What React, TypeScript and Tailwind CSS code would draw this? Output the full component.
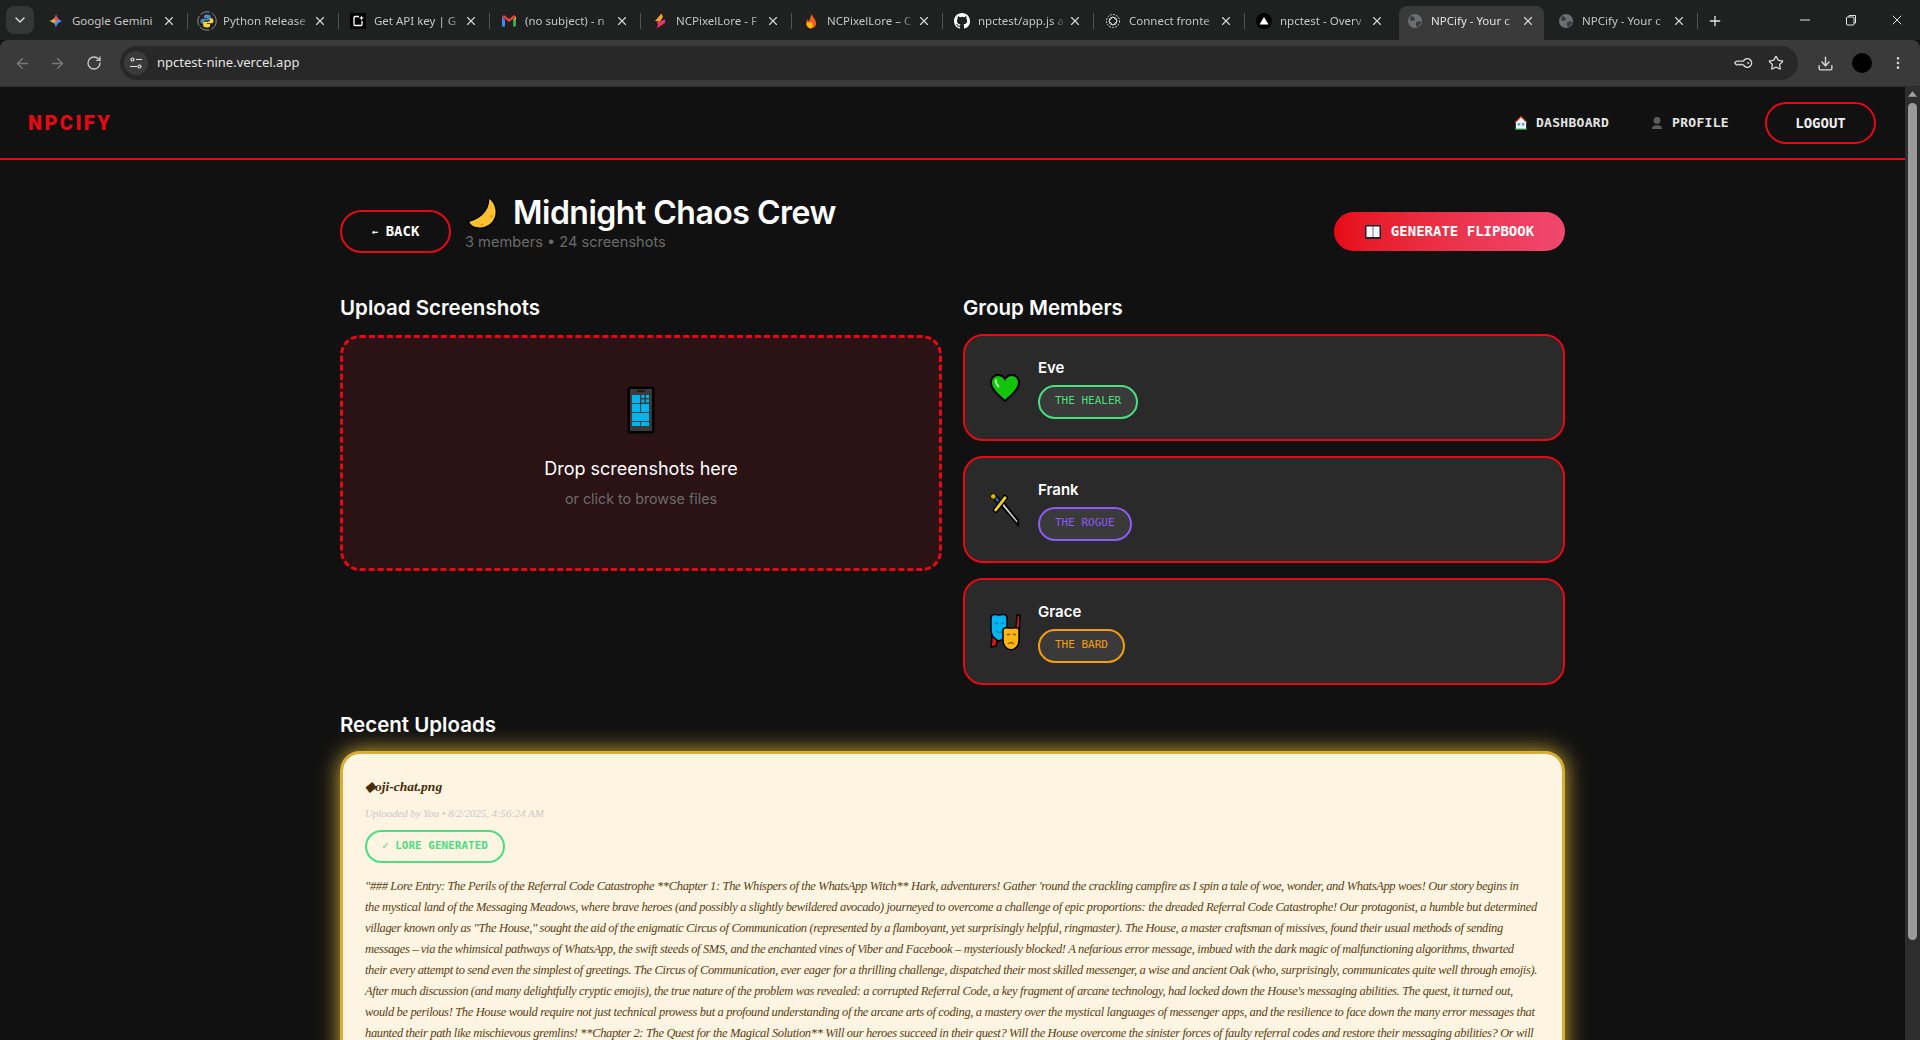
import { ReactNode } from 'react'
import {
  ArrowLeft,
  ArrowRight,
  ChevronDown,
  Download,
  KeyRound,
  Minus,
  MoreVertical,
  Plus,
  RotateCw,
  Star,
  X,
} from 'lucide-react'

const Gemini = () => (
  <svg viewBox="0 0 16 16" className="w-4 h-4">
    <path d="M8 1 C8.5 5 11 7.5 15 8 C11 8.5 8.5 11 8 15 C7.5 11 5 8.5 1 8 C5 7.5 7.5 5 8 1Z" fill="#4f8ff7" />
    <path d="M8 1 C8.3 3.5 9.5 5.5 11.5 6.5 L8 8 L4.5 6.5 C6.5 5.5 7.7 3.5 8 1Z" fill="#e8534a" />
    <path d="M1 8 C3 7.8 4.5 7 5.5 5.8 L8 8 L5.5 10.2 C4.5 9 3 8.2 1 8Z" fill="#f4b400" />
  </svg>
)

const Python = () => (
  <svg viewBox="0 0 20 20" className="w-5 h-5 shrink-0">
    <circle cx="10" cy="10" r="9.2" fill="none" stroke="#8a8d90" strokeWidth="1" strokeDasharray="10 2" />
    <path d="M10 3.5c-2.6 0-3 1-3 2v1.5h3.2v.7H5.6C4.4 7.700 3.500 8.700 3.500 10.300c0 1.600.9 2.500 2 2.500H7v-1.600c0-1.100 1-2 2.100-2h3c1 0 1.700-.8 1.700-1.800V5.500c0-1-1-2-3.800-2z" fill="#4b8bbe" />
    <path d="M10 16.500c2.600 0 3-1 3-2V13H9.800v-.7h4.600c1.200 0 2.100-1 2.100-2.600 0-1.600-.9-2.500-2-2.500H13v1.600c0 1.100-1 2-2.100 2h-3c-1 0-1.700.8-1.700 1.800v1.900c0 1 1 2 3.800 2z" fill="#ffd43b" />
  </svg>
)

const ApiKey = () => (
  <svg viewBox="0 0 16 16" className="w-4 h-4">
    <rect width="16" height="16" fill="#000" />
    <path d="M9 3.500H5a1 1 0 0 0-1 1v7a1 1 0 0 0 1 1h6a1 1 0 0 0 1-1V8" fill="none" stroke="#fff" strokeWidth="1.300" />
    <path d="M11.500 2.500l.7 1.800 1.800.7-1.800.7-.7 1.800-.7-1.800-1.800-.7 1.800-.7z" fill="#fff" />
  </svg>
)

const Gmail = () => (
  <svg viewBox="0 0 16 16" className="w-4 h-4">
    <path d="M1 3.500v10h3V7z" fill="#4285f4" />
    <path d="M15 3.500v10h-3V7z" fill="#34a853" />
    <path d="M1 3.500 8 9l7-5.500L13 2 8 6 3 2z" fill="#ea4335" />
    <path d="M12 7l3-3.500V6z" fill="#fbbc04" />
  </svg>
)

const Spark = () => (
  <svg viewBox="0 0 16 16" className="w-4 h-4">
    <path d="M9.500 0.500 3 8l5 .500L11 4z" fill="#f5a623" />
    <path d="M13 6.500 5 9l1 3-1.500 3.500L13 10z" fill="#e8336d" />
  </svg>
)

const Flame = () => (
  <svg viewBox="0 0 16 16" className="w-4 h-4">
    <path d="M8.500 1C9.500 4 13 6 13 10.500A5 5 0 0 1 3 10.500C3 8.500 4 7.500 4.800 6.500L6 8.500C7 6 7.500 3.500 8.500 1Z" fill="#f4611e" />
    <path d="M4 9.500A4.500 5 0 0 0 8 15.500 4 4 0 0 0 8 9c-1 .8-3 1.200-4 .500z" fill="#ffc107" />
  </svg>
)

const Github = () => (
  <svg viewBox="0 0 16 16" className="w-4 h-4" fill="#fff">
    <path d="M8 0C3.580 0 0 3.580 0 8c0 3.540 2.290 6.530 5.470 7.590.4.070.55-.17.55-.38 0-.19-.01-.82-.01-1.490-2.010.37-2.530-.49-2.690-.94-.09-.23-.48-.94-.82-1.130-.28-.15-.68-.52-.01-.53.63-.01 1.080.58 1.230.82.720 1.210 1.870.870 2.330.660.070-.520.280-.870.510-1.070-1.780-.200-3.640-.890-3.640-3.950 0-.870.310-1.590.820-2.150-.080-.200-.360-1.020.080-2.120 0 0 .670-.210 2.200.820a7.420 7.420 0 0 1 4 0c1.530-1.040 2.200-.820 2.200-.820.440 1.100.160 1.920.080 2.120.510.560.820 1.270.820 2.150 0 3.070-1.870 3.750-3.650 3.950.290.250.540.730.540 1.480 0 1.070-.010 1.930-.010 2.200 0 .210.150.460.550.380A8.010 8.010 0 0 0 16 8c0-4.420-3.580-8-8-8z" />
  </svg>
)

const OpenAi = () => (
  <svg viewBox="0 0 16 16" className="w-4 h-4" fill="none" stroke="#c4c7c5" strokeWidth="1">
    <circle cx="8" cy="8" r="6.500" strokeDasharray="2 1" />
    <circle cx="8" cy="8" r="4" />
    <path d="M4 8l4-4 4 4-4 4z" />
  </svg>
)

const Vercel = () => (
  <svg viewBox="0 0 16 16" className="w-4 h-4">
    <circle cx="8" cy="8" r="8" fill="#000" />
    <path d="M8 4l4.500 7.500h-9z" fill="#fff" />
  </svg>
)

const Globe = () => (
  <svg viewBox="0 0 16 16" className="w-4 h-4">
    <circle cx="8" cy="8" r="7" fill="#6b6e72" />
    <path d="M4 3l3 1 1 3-3 1-2-1zM9 9l4-1 1 2-3 4-2-1z" fill="#3a3a3a" />
  </svg>
)

const tabs: { title: string; icon: ReactNode; active?: boolean; fade?: boolean }[] = [
  { title: 'Google Gemini', icon: <Gemini /> },
  { title: 'Python Release', icon: <Python />, fade: true },
  { title: 'Get API key | G', icon: <ApiKey />, fade: true },
  { title: '(no subject) - n', icon: <Gmail />, fade: true },
  { title: 'NCPixelLore - F', icon: <Spark />, fade: true },
  { title: 'NCPixelLore – C', icon: <Flame />, fade: true },
  { title: 'npctest/app.js a', icon: <Github />, fade: true },
  { title: 'Connect fronte', icon: <OpenAi />, fade: true },
  { title: 'npctest - Overv', icon: <Vercel />, fade: true },
  { title: 'NPCify - Your c', icon: <Globe />, active: true, fade: true },
  { title: 'NPCify - Your c', icon: <Globe />, fade: true },
]

// emoji are drawn because the box has no colour emoji font
const Moon = () => (
  <svg viewBox="1 0 30 32" className="w-8 h-[34px] shrink-0">
    <path d="M21 1C22 10 17 20 2 24C5 31 16 33 24 26C31 19 30 7 21 1z" fill="#fdc02f" stroke="#000" strokeWidth="1.500" />
    <circle cx="15" cy="27" r="1.200" fill="#d99a1c" />
    <circle cx="24" cy="19" r="1.200" fill="#d99a1c" />
  </svg>
)

const Phone = () => (
  <svg viewBox="0 0 28 48" className="w-7 h-12">
    <rect x="0.500" y="0.500" width="27" height="47" rx="3" fill="#000" />
    <rect x="3" y="3" width="22" height="42" fill="#3a3a3a" />
    <rect x="10" y="4.500" width="8" height="1" fill="#000" />
    <rect x="5" y="9" width="8" height="8" fill="#00b4f0" />
    <rect x="14.500" y="9" width="3" height="3" fill="#00b4f0" />
    <rect x="19" y="9" width="3" height="3" fill="#00b4f0" />
    <rect x="14.500" y="13.500" width="3" height="3" fill="#00b4f0" />
    <rect x="19" y="13.500" width="3" height="3" fill="#00b4f0" />
    <rect x="5" y="18" width="8" height="8" fill="#00b4f0" />
    <rect x="14" y="18" width="8" height="8" fill="#00b4f0" />
    <rect x="5" y="27" width="17" height="8" fill="#00b4f0" />
    <rect x="5" y="36" width="8" height="4" fill="#00b4f0" />
    <rect x="14" y="36" width="8" height="4" fill="#00b4f0" />
  </svg>
)

const Heart = () => (
  <svg viewBox="0 0 32 32" className="w-8 h-8">
    <path d="M16 29C9 23 2 17 2 10.500 2 6 5.500 3 9 3c3 0 5.500 1.500 7 4 1.500-2.500 4-4 7-4 3.500 0 7 3 7 7.500C30 17 23 23 16 29z" fill="#13c40c" stroke="#000" strokeWidth="2" />
    <path d="M7 8c-.5 2 .5 4.500 2.500 6.500" fill="none" stroke="#9fe89b" strokeWidth="2" strokeLinecap="round" />
  </svg>
)

const Sword = () => (
  <svg viewBox="0 0 32 36" className="w-[30px] h-[36px]">
    <path d="M10 11 L27 31 L30 34 L30 29 L13 8z" fill="#d0d0d0" stroke="#000" strokeWidth="2" />
    <path d="M4 3 L11 11" stroke="#000" strokeWidth="6" strokeLinecap="round" />
    <path d="M4 3 L11 11" stroke="#1565a8" strokeWidth="3" />
    <circle cx="3.500" cy="3.500" r="3" fill="#e0b400" stroke="#000" />
    <path d="M16 5 L6 18" stroke="#000" strokeWidth="6" strokeLinecap="round" />
    <path d="M16 5 L6 18" stroke="#f3d21a" strokeWidth="3" strokeLinecap="round" />
  </svg>
)

const Masks = () => (
  <svg viewBox="0 0 32 38" className="w-8 h-[38px]">
    <path d="M4 14 2 34l5-1 3-12zM28 2l3 0-1 26-4 0z" fill="#d3161f" stroke="#000" strokeWidth="1.500" />
    <path d="M2 5C2 1 6 1 10 2 14 1 18 1 18 5v12c0 6-3 9-8 11C5 26 2 23 2 17z" fill="#00b4f0" stroke="#000" strokeWidth="1.500" />
    <path d="M6 11q2-1.500 3 0M12 11q2-1.500 3 0M7 18q3 3 7 0" fill="none" stroke="#0a6ea8" strokeWidth="1.200" />
    <path d="M14 17c0-3 4-2 8-2 4 0 8-1 8 2v10c0 6-3 9-8 10-5-1-8-5-8-10z" fill="#fdb515" stroke="#000" strokeWidth="1.500" />
    <path d="M18 22q1.500-1.500 3 0M24 22q1.500-1.500 3 0M19 31q3-3 6 0" fill="none" stroke="#8a5a00" strokeWidth="1.200" />
  </svg>
)

const House = () => (
  <svg viewBox="0 0 14 16" className="w-3 h-4">
    <path d="M1 15V7l6-6 6 6v8z" fill="#f2f2f2" />
    <path d="M0 7.500 7 .5l7 7" fill="none" stroke="#d6402b" strokeWidth="1.300" />
    <rect x="3" y="8" width="3" height="3" fill="#4aa8e0" />
    <rect x="8" y="8" width="3" height="3" fill="#4aa8e0" />
    <rect x="0" y="14.500" width="14" height="1.500" fill="#2e9e3f" />
  </svg>
)

const Bust = () => (
  <svg viewBox="0 0 14 16" className="w-3 h-4">
    <circle cx="7" cy="5" r="4" fill="#5c5c5c" />
    <path d="M1 15c0-3 2-4.500 6-4.500s6 1.500 6 4.500z" fill="#5c5c5c" />
  </svg>
)

const Book = () => (
  <svg viewBox="0 0 16 14" className="w-4 h-3.5">
    <rect width="16" height="14" rx="1" fill="#1b2433" />
    <path d="M1.500 1.500H7.700V12H1.500zM8.300 1.500H14.500V12H8.300z" fill="#f5f5f5" />
  </svg>
)

const members = [
  {
    name: 'Eve',
    role: 'THE HEALER',
    icon: <Heart />,
    badge: 'border-[#4ade80] text-[#4ade80]',
  },
  {
    name: 'Frank',
    role: 'THE ROGUE',
    icon: <Sword />,
    badge: 'border-[#8b5cf6] text-[#8b5cf6]',
  },
  {
    name: 'Grace',
    role: 'THE BARD',
    icon: <Masks />,
    badge: 'border-[#f59e0b] text-[#f59e0b]',
  },
]

const loreLines = [
  '"### Lore Entry: The Perils of the Referral Code Catastrophe **Chapter 1: The Whispers of the WhatsApp Witch** Hark, adventurers! Gather \'round the crackling campfire as I spin a tale of woe, wonder, and WhatsApp woes! Our story begins in',
  'the mystical land of the Messaging Meadows, where brave heroes (and possibly a slightly bewildered avocado) journeyed to overcome a challenge of epic proportions: the dreaded Referral Code Catastrophe! Our protagonist, a humble but determined',
  'villager known only as "The House," sought the aid of the enigmatic Circus of Communication (represented by a flamboyant, yet surprisingly helpful, ringmaster). The House, a master craftsman of missives, found their usual methods of sending',
  'messages – via the whimsical pathways of WhatsApp, the swift steeds of SMS, and the enchanted vines of Viber and Facebook – mysteriously blocked! A nefarious error message, imbued with the dark magic of malfunctioning algorithms, thwarted',
  'their every attempt to send even the simplest of greetings. The Circus of Communication, ever eager for a thrilling challenge, dispatched their most skilled messenger, a wise and ancient Oak (who, surprisingly, communicates quite well through emojis).',
  "After much discussion (and many delightfully cryptic emojis), the true nature of the problem was revealed: a corrupted Referral Code, a key fragment of arcane technology, had locked down the House's messaging abilities. The quest, it turned out,",
  'would be perilous! The House would require not just technical prowess but a profound understanding of the arcane arts of coding, a mastery over the mystical languages of messenger apps, and the resilience to face down the many error messages that',
  'haunted their path like mischievous gremlins! **Chapter 2: The Quest for the Magical Solution** Will our heroes succeed in their quest? Will the House overcome the sinister forces of faulty referral codes and restore their messaging abilities? Or will',
]

function BrowserChrome() {
  return (
    <div className="font-['Noto_Sans',sans-serif] shrink-0">
      {/* Tab strip */}
      <div className="flex h-10 bg-[#1f2020] items-end">
        <div className="w-10 h-10 flex items-start pt-[6px] pl-[6px]">
          <div className="w-7 h-7 rounded-lg bg-[#353636] flex items-center justify-center">
            <ChevronDown className="w-4 h-4 text-[#e3e3e3]" />
          </div>
        </div>
        {tabs.map((tab, i) => (
          <div key={i} className="w-[151px] h-[34px] flex items-center">
            <div
              className={`w-[145px] h-[34px] flex items-center pl-2 pb-[5px] rounded-t-lg ${
                tab.active ? 'bg-[#3a3a3a]' : ''
              }`}
            >
              <div className="w-4 h-4 flex items-center justify-center shrink-0">{tab.icon}</div>
              <span
                className={`ml-2 w-[88px] overflow-hidden whitespace-nowrap text-[11.5px] ${
                  tab.fade ? '[mask-image:linear-gradient(to_right,black_84%,transparent)]' : ''
                } ${tab.active ? 'text-[#e3e3e3]' : 'text-[#c4c7c5]'}`}
              >
                {tab.title}
              </span>
              <X className="w-3.5 h-3.5 ml-[2px] shrink-0 text-[#d5d5d5]" strokeWidth={2} />
            </div>
            {!tab.active && i !== 8 && <div className="w-px h-4 bg-[#505252] ml-[2px] mb-[5px]" />}
          </div>
        ))}
        <div className="h-[34px] flex items-center pl-[6px] pb-[5px]">
          <Plus className="w-4 h-4 text-[#e3e3e3]" />
        </div>
        <div className="ml-auto h-10 flex items-center text-[#e3e3e3]">
          <div className="w-[46px] flex justify-center">
            <Minus className="w-4 h-4" strokeWidth={1.5} />
          </div>
          <div className="w-[46px] flex justify-center">
            <svg viewBox="0 0 12 12" className="w-3 h-3" fill="none" stroke="currentColor">
              <rect x="1.500" y="3" width="7.500" height="8" rx="1" />
              <path d="M4 3V1.500h6.500V9H9" />
            </svg>
          </div>
          <div className="w-[46px] flex justify-center">
            <X className="w-4 h-4" strokeWidth={1.5} />
          </div>
        </div>
      </div>

      {/* Toolbar */}
      <div className="h-[47px] bg-[#3a3a3a] rounded-t-lg flex items-start pt-[6px] border-b border-[#2a2a2a]">
        <div className="w-[120px] h-[34px] flex items-center pl-[14px] gap-[18px]">
          <ArrowLeft className="w-[17px] h-[17px] text-[#777]" />
          <ArrowRight className="w-[17px] h-[17px] text-[#777]" />
          <RotateCw className="w-4 h-4 text-[#c7c7c7] ml-[2px]" />
        </div>
        <div className="w-[1678px] h-[34px] rounded-full bg-[#282828] flex items-center pl-[4px] pr-[14px]">
          <div className="w-6 h-6 rounded-full bg-[#3a3a3a] flex items-center justify-center">
            <svg viewBox="0 0 14 14" className="w-3.5 h-3.5" fill="none" stroke="#e3e3e3" strokeWidth="1.200">
              <circle cx="3.500" cy="3.500" r="1.500" />
              <circle cx="10.500" cy="10.500" r="1.500" />
              <path d="M7 3.500h6M1 10.500h7" />
            </svg>
          </div>
          <span className="ml-[9px] text-[13px] text-[#e3e3e3]">npctest-nine.vercel.app</span>
          <KeyRound className="w-4 h-4 ml-auto text-[#d5d5d5] rotate-45" />
          <Star className="w-4 h-4 ml-4 text-[#d5d5d5]" />
        </div>
        <div className="flex-1 h-[34px] flex items-center pl-[19px] gap-[18px] text-[#d5d5d5]">
          <Download className="w-[17px] h-[17px]" />
          <div className="w-5 h-5 rounded-full bg-black" />
          <MoreVertical className="w-4 h-4" />
        </div>
      </div>
    </div>
  )
}

function MemberCard({ member }: { member: (typeof members)[number] }) {
  return (
    <div className="h-[107px] rounded-[20px] border-2 border-[#e50914] bg-[#2a2a2a] flex items-center pl-[23px]">
      <div className="w-[34px] flex justify-center">{member.icon}</div>
      <div className="ml-[16px]">
        <div className="text-[15px] font-semibold text-white leading-[22px] mb-[6px]">{member.name}</div>
        <span
          className={`inline-flex items-center h-[34px] px-[15px] rounded-full border-2 bg-[#3a3a3a] font-['DejaVu_Sans_Mono',monospace] text-[11px] ${member.badge}`}
        >
          {member.role}
        </span>
      </div>
    </div>
  )
}

export default function App() {
  return (
    <div className="w-screen h-screen overflow-hidden flex flex-col bg-[#111111]">
      <BrowserChrome />
      <div className="flex flex-1 min-h-0">
        <main className="flex-1 min-w-0 overflow-hidden font-['Inter',sans-serif]">
          {/* Nav */}
          <nav className="h-[73px] border-b-2 border-[#e50914] flex items-center justify-between pl-7 pr-[29px]">
            <span className="font-['Roboto',sans-serif] font-black text-[20px] tracking-[2.400px] text-[#e50914]">
              NPCIFY
            </span>
            <div className="flex items-center font-['DejaVu_Sans_Mono',monospace] font-bold text-[#e5e5e5] pt-[1px]">
              <a className="flex items-center gap-[9px] text-[13px] tracking-[0.300px]">
                <House />
                DASHBOARD
              </a>
              <a className="flex items-center gap-[9px] text-[13px] tracking-[0.300px] ml-[42px]">
                <Bust />
                PROFILE
              </a>
              <button className="ml-9 w-[111px] h-[42px] rounded-full border-2 border-[#e50914] text-[14px] text-[#eee]">
                LOGOUT
              </button>
            </div>
          </nav>

          <div className="w-[1225px] mx-auto">
            {/* Group header */}
            <div className="mt-[34px] h-[75px] flex items-center justify-between">
              <div className="flex items-center">
                <button className="w-[111px] h-[43px] rounded-full border-2 border-[#e50914] text-white font-['DejaVu_Sans_Mono',monospace] font-bold text-[14px] flex items-center justify-center gap-[8px]">
                  <span className="text-[10px]">←</span>BACK
                </button>
                <div className="ml-[14px] pb-[17px]">
                  <h1 className="flex items-center gap-[14px] pl-[2px] h-[38px] text-[32px] font-semibold text-white tracking-[-0.500px]">
                    <Moon />
                    Midnight Chaos Crew
                  </h1>
                  <p className="text-[14.600px] leading-[20px] text-[#6b6b6b]">3 members • 24 screenshots</p>
                </div>
              </div>
              <button className="w-[231px] h-[39px] rounded-full bg-gradient-to-r from-[#e50914] to-[#f1476f] text-white font-['DejaVu_Sans_Mono',monospace] font-bold text-[14px] flex items-center justify-center gap-[10px]">
                <Book />
                GENERATE FLIPBOOK
              </button>
            </div>

            {/* Upload + members */}
            <div className="mt-6 grid grid-cols-2 gap-x-[21px]">
              <section>
                <h2 className="text-[20.500px] leading-[30px] font-semibold text-white mb-[12px]">Upload Screenshots</h2>
                <div className="h-[236px] rounded-[20px] border-[3px] border-dashed border-[#e50914] bg-[#2a1215] flex flex-col items-center pt-[48px]">
                  <Phone />
                  <div className="mt-[21px] text-[18px] leading-[28px] text-white">Drop screenshots here</div>
                  <div className="mt-[4px] text-[14.300px] leading-[24px] text-[#6b6b6b]">or click to browse files</div>
                </div>
              </section>
              <section>
                <h2 className="text-[20.500px] leading-[30px] font-semibold text-white mb-[11px]">Group Members</h2>
                <div className="flex flex-col gap-[15px]">
                  {members.map((m) => (
                    <MemberCard key={m.name} member={m} />
                  ))}
                </div>
              </section>
            </div>

            {/* Recent uploads */}
            <h2 className="mt-[25px] text-[20.500px] leading-[30px] font-semibold text-white mb-[11px]">Recent Uploads</h2>
            <div className="h-[400px] rounded-[20px] border-[3px] border-[#d4af37] bg-[#fdf5e2] shadow-[0_0_22px_#d4af37] px-[22px] pt-[23px] font-['Liberation_Serif',serif] italic">
              <div className="text-[13.500px] leading-[20px] text-[#4a2a08] font-bold">◆oji-chat.png</div>
              <div className="mt-[7px] text-[11px] tracking-[-0.100px] leading-[18px] text-[#c9c9c9]">
                Uploaded by You • 8/2/2025, 4:56:24 AM
              </div>
              <span className="mt-[8px] inline-flex items-center h-[33px] px-[15px] rounded-full border-2 border-[#4ade80] text-[#4ade80] font-['DejaVu_Sans_Mono',monospace] not-italic font-bold text-[11px] gap-[6px]">
                ✓ LORE GENERATED
              </span>
              <div className="mt-[13px] text-[12.500px] tracking-[-0.350px] leading-[21px] text-[#5c3d12]">
                {loreLines.map((line, i) => (
                  <div key={i} className="whitespace-nowrap">
                    {line}
                  </div>
                ))}
              </div>
            </div>
          </div>
        </main>

        {/* Scrollbar */}
        <div className="w-[15px] shrink-0 bg-[#2e2e2e] flex flex-col items-center">
          <svg viewBox="0 0 10 6" className="w-[9px] h-[6px] mt-[4px] shrink-0">
            <path d="M5 0l5 6H0z" fill="#a0a0a0" />
          </svg>
          <div className="mt-[6px] w-[9px] h-[837px] rounded-full bg-[#9a9a9a]" />
        </div>
      </div>
    </div>
  )
}
